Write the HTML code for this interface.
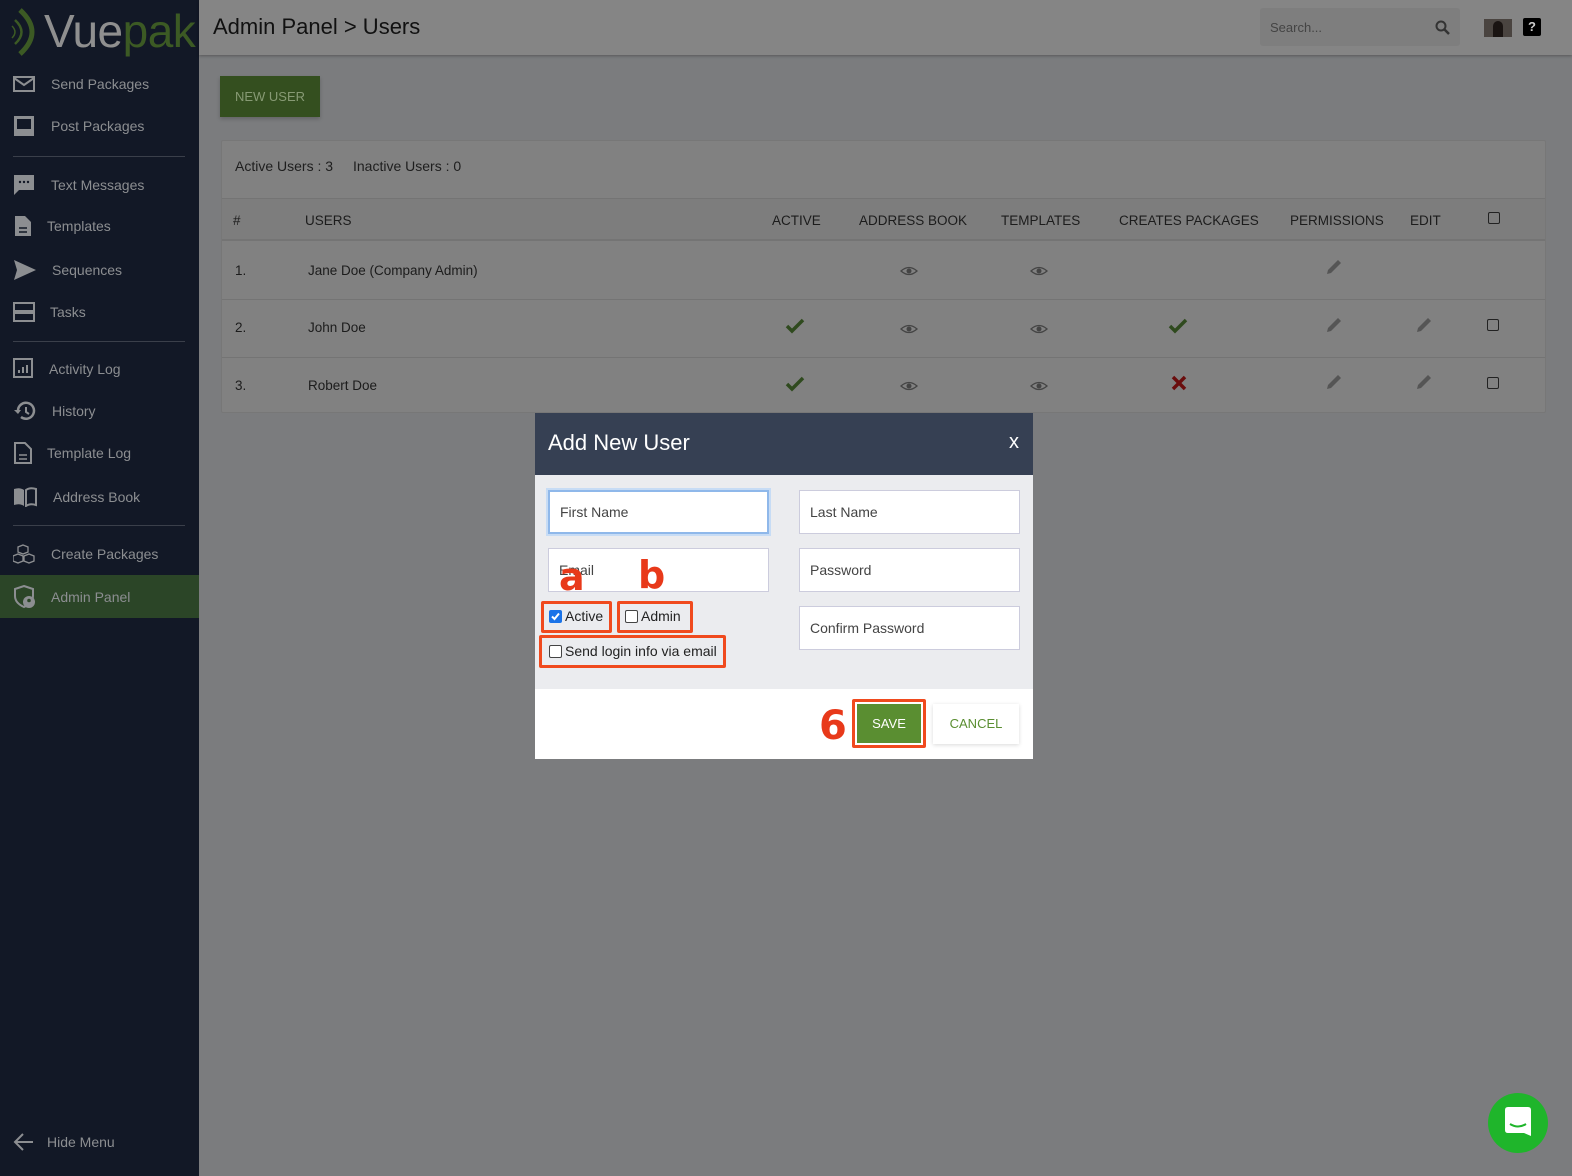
<!DOCTYPE html>
<html><head><meta charset="utf-8">
<style>
*{box-sizing:border-box;margin:0;padding:0}
body{width:1572px;height:1176px;overflow:hidden;font-family:"Liberation Sans",sans-serif;background:#7b7c7e;position:relative;color:#1e1e1e}
.sb{position:absolute;left:0;top:0;width:199px;height:1176px;background:#121826}
.logo{position:absolute;left:10px;top:4px;font-size:46px;letter-spacing:-0.5px}
.logo .v{color:#8f8f8f;margin-left:34px}.logo .p{color:#3c5a24}
.it{position:absolute;left:0;width:199px;height:42px;color:#8c8e91;font-size:14px;display:flex;align-items:center}
.it span{position:absolute;left:51px}
.it svg{position:absolute;left:13px}
.hr{position:absolute;left:13px;width:172px;height:1px;background:#3a3f4a}
.act{background:#2b4527}
.hdr{position:absolute;left:199px;top:0;right:0;height:55px;background:#858585;box-shadow:0 1px 3px rgba(0,0,0,.3)}
.hdr h1{position:absolute;left:14px;top:14px;font-weight:normal;font-size:22px;color:#111}
.search{position:absolute;left:1061px;top:8px;width:200px;height:38px;background:#7e7e7e;border-radius:3px;color:#444;font-size:13px;padding:12px 10px}
.btn{position:absolute;left:220px;top:76px;width:100px;height:41px;background:#344f1f;color:#879a74;font-size:13px;text-align:center;line-height:41px;box-shadow:0 2px 4px rgba(0,0,0,.2)}
.card{position:absolute;left:221px;top:140px;width:1325px;height:273px;background:#818181;border:1px solid #777;border-radius:2px}
.card .s{position:absolute;top:17px;font-size:14px}
.th{position:absolute;left:0;top:57px;width:100%;height:43px;background:#7d7d7d;border-top:1px solid #747474;border-bottom:2px solid #747474}
.t{position:absolute;font-size:13.5px;color:#1c1c1c}
.row{position:absolute;left:0;width:100%;height:58px;border-bottom:1px solid #747474}
.cb{position:absolute;width:12px;height:12px;border:1px solid #222;border-radius:2px}
.modal{position:absolute;left:535px;top:413px;width:498px;height:346px;background:#ebecef}
.mh{height:62px;background:#364053;color:#fff;font-size:22px;padding:17px 13px;position:relative}
.mh b{position:absolute;right:14px;top:18px;font-weight:normal;font-size:20px}
.in{position:absolute;width:221px;height:44px;background:#fff;border:1px solid #ccd;font-size:14px;color:#444;padding:13px 10px}
.ft{position:absolute;left:0;bottom:0;width:100%;height:70px;background:#fff}
.red{position:absolute;border:3px solid #f04a1e;border-radius:2px}
.lbl{position:absolute;font-size:14px;color:#222}
.big{position:absolute;color:#e8391a;font-weight:bold;font-family:"DejaVu Sans",sans-serif}
</style></head><body>
<div class="sb">
 <div class="logo"><svg style="position:absolute;left:0;top:4px" width="34" height="48" viewBox="0 0 34 48"><path d="M10 2 Q34 24 10 46" stroke="#3c5a24" stroke-width="5" fill="none"/><path d="M5 12 Q18 24 5 36" stroke="#3c5a24" stroke-width="2.5" fill="none"/><path d="M2 18 Q8 24 2 30" stroke="#3c5a24" stroke-width="1.5" fill="none"/></svg><span class="v">Vue</span><span class="p">pak</span></div>
 <div class="it" style="top:63px"><svg width="22" height="18"><rect x="1" y="2" width="20" height="14" fill="none" stroke="#8c8e91" stroke-width="2"/><path d="M1 3 L11 10 L21 3" stroke="#8c8e91" stroke-width="2" fill="none"/></svg><span>Send Packages</span></div>
 <div class="it" style="top:105px"><svg width="22" height="22"><rect x="1" y="1" width="20" height="20" fill="#8c8e91"/><rect x="4" y="4" width="14" height="10" fill="#121826"/></svg><span>Post Packages</span></div>
 <div class="hr" style="top:156px"></div>
 <div class="it" style="top:164px"><svg width="22" height="22"><path d="M1 1 H21 V16 H6 L1 21 Z" fill="#8c8e91"/><circle cx="7" cy="8" r="1.2" fill="#121826"/><circle cx="11" cy="8" r="1.2" fill="#121826"/><circle cx="15" cy="8" r="1.2" fill="#121826"/></svg><span>Text Messages</span></div>
 <div class="it" style="top:205px"><svg width="22" height="22"><path d="M2 1 H12 L18 7 V21 H2 Z" fill="#8c8e91"/><path d="M6 13 H14 M6 17 H14" stroke="#121826" stroke-width="1.5"/></svg><span style="left:47px">Templates</span></div>
 <div class="it" style="top:249px"><svg width="24" height="22"><path d="M1 1 L23 11 L1 21 L4 11 Z" fill="#8c8e91"/></svg><span style="left:52px">Sequences</span></div>
 <div class="it" style="top:291px"><svg width="22" height="22"><rect x="1" y="2" width="20" height="8" fill="none" stroke="#8c8e91" stroke-width="2"/><rect x="1" y="12" width="20" height="8" fill="none" stroke="#8c8e91" stroke-width="2"/></svg><span style="left:50px">Tasks</span></div>
 <div class="hr" style="top:341px"></div>
 <div class="it" style="top:348px"><svg width="22" height="22"><rect x="1" y="1" width="18" height="18" fill="none" stroke="#8c8e91" stroke-width="2"/><path d="M6 15v-3M10 15v-6M14 15v-8" stroke="#8c8e91" stroke-width="2"/></svg><span style="left:49px">Activity Log</span></div>
 <div class="it" style="top:390px"><svg width="24" height="22"><path d="M5 11 A8 8 0 1 1 8 17" stroke="#8c8e91" stroke-width="2.5" fill="none"/><path d="M1 10 L5 14 L8 10" fill="#8c8e91"/><path d="M13 7 V12 L16 14" stroke="#8c8e91" stroke-width="2" fill="none"/></svg><span style="left:52px">History</span></div>
 <div class="it" style="top:432px"><svg width="22" height="22"><path d="M2 1 H12 L18 7 V21 H2 Z" fill="none" stroke="#8c8e91" stroke-width="2"/><path d="M6 13 H14 M6 17 H14" stroke="#8c8e91" stroke-width="1.5"/></svg><span style="left:47px">Template Log</span></div>
 <div class="it" style="top:476px"><svg width="24" height="20"><path d="M1 2 Q7 0 11 3 V19 Q7 16 1 18 Z" fill="#8c8e91"/><path d="M13 3 Q17 0 23 2 V18 Q17 16 13 19 Z" fill="none" stroke="#8c8e91" stroke-width="2"/></svg><span style="left:53px">Address Book</span></div>
 <div class="hr" style="top:525px"></div>
 <div class="it" style="top:533px"><svg width="24" height="22"><path d="M8 2l5 2v5l-5 2-5-2V4z M3 11l5 2v5l-5 2-5-2v-5z M14 11l5 2v5l-5 2-5-2v-5z" fill="none" stroke="#8c8e91" stroke-width="1.3" transform="translate(2,0)"/></svg><span>Create Packages</span></div>
 <div class="it act" style="top:575px;height:43px"><svg width="24" height="24"><path d="M11 1 L20 4 V11 Q20 18 11 22 Q2 18 2 11 V4 Z" fill="none" stroke="#8c8e91" stroke-width="2"/><circle cx="16" cy="17" r="6" fill="#8c8e91"/><circle cx="16" cy="15.5" r="1.8" fill="#2b4527"/></svg><span>Admin Panel</span></div>
 <div class="it" style="top:1121px"><svg width="22" height="22"><path d="M20 11 H3 M10 3 L2 11 L10 19" stroke="#8c8e91" stroke-width="2" fill="none"/></svg><span style="left:47px">Hide Menu</span></div>
</div>
<div class="hdr"><h1>Admin Panel &gt; Users</h1>
 <div class="search">Search...<svg style="position:absolute;right:10px;top:12px" width="15" height="15"><circle cx="6" cy="6" r="4.5" stroke="#333" stroke-width="2" fill="none"/><path d="M9.5 9.5 L14 14" stroke="#333" stroke-width="2.5"/></svg></div>
 <div style="position:absolute;left:1285px;top:19px;width:28px;height:18px;background:#4a4440"><div style="margin:2px 9px;width:10px;height:16px;background:#1a1412;border-radius:5px 5px 0 0"></div></div>
 <div style="position:absolute;left:1324px;top:18px;width:18px;height:18px;background:#000;border-radius:2px;color:#ccc;font-size:13px;font-weight:bold;text-align:center;line-height:18px">?</div>
</div>
<div class="btn">NEW USER</div>
<div class="card">
 <div class="s" style="left:13px">Active Users : 3</div><div class="s" style="left:131px">Inactive Users : 0</div>
 <div class="th">
  <div class="t" style="left:11px;top:14px">#</div><div class="t" style="left:83px;top:14px">USERS</div>
  <div class="t" style="left:550px;top:14px">ACTIVE</div><div class="t" style="left:637px;top:14px">ADDRESS BOOK</div>
  <div class="t" style="left:779px;top:14px">TEMPLATES</div><div class="t" style="left:897px;top:14px">CREATES PACKAGES</div>
  <div class="t" style="left:1068px;top:14px">PERMISSIONS</div><div class="t" style="left:1188px;top:14px">EDIT</div>
  <div class="cb" style="left:1266px;top:13px"></div>
 </div>
 <div class="row" style="top:101px"><div class="t" style="left:13px;top:21px">1.</div><div class="t" style="left:86px;top:21px">Jane Doe (Company Admin)</div></div>
 <div class="row" style="top:159px"><div class="t" style="left:13px;top:20px">2.</div><div class="t" style="left:86px;top:20px">John Doe</div><div class="cb" style="left:1265px;top:19px"></div></div>
 <div class="row" style="top:216px;border:none"><div class="t" style="left:13px;top:21px">3.</div><div class="t" style="left:86px;top:21px">Robert Doe</div><div class="cb" style="left:1265px;top:20px"></div></div>
 <svg style="position:absolute;left:0;top:0" width="1325" height="273">
  <defs><g id="eye"><path d="M-8 0 Q0 -7 8 0 Q0 7 -8 0Z" fill="none" stroke="#444" stroke-width="1.3"/><circle r="2.5" fill="#444"/></g>
  <g id="pen"><path d="M-7 7 L-6 3 L4 -7 L7 -4 L-3 6 Z" fill="#555"/></g>
  <path id="chk" d="M-8 0 L-3 5 L8 -6" stroke="#2f4a1e" stroke-width="3.5" fill="none"/></defs>
  <use href="#eye" x="687" y="130"/><use href="#eye" x="817" y="130"/><use href="#pen" x="1112" y="126"/>
  <use href="#chk" x="573" y="185"/><use href="#eye" x="687" y="188"/><use href="#eye" x="817" y="188"/><use href="#chk" x="956" y="185"/><use href="#pen" x="1112" y="184"/><use href="#pen" x="1202" y="184"/>
  <use href="#chk" x="573" y="243"/><use href="#eye" x="687" y="245"/><use href="#eye" x="817" y="245"/><path d="M951 236 L963 248 M963 236 L951 248" stroke="#6a0d0d" stroke-width="3.5"/><use href="#pen" x="1112" y="241"/><use href="#pen" x="1202" y="241"/>
 </svg>
</div>
<div class="modal">
 <div class="mh">Add New User<b>x</b></div>
 <div class="in" style="left:13px;top:77px;border:2px solid #8fb8ea;box-shadow:0 0 0 2px #c7dcf5;padding:12px 10px">First Name</div>
 <div class="in" style="left:264px;top:77px">Last Name</div>
 <div class="in" style="left:13px;top:135px">Email</div>
 <div class="in" style="left:264px;top:135px">Password</div>
 <div class="in" style="left:264px;top:193px">Confirm Password</div>
 <div class="big" style="left:24px;top:142px;font-size:38px">a</div>
 <div class="big" style="left:103px;top:140px;font-size:38px">b</div>
 <div class="red" style="left:6px;top:188px;width:71px;height:32px"></div>
 <div style="position:absolute;left:14px;top:197px;width:13px;height:13px;background:#1a73e8;border-radius:2px"><svg width="13" height="13"><path d="M3 6.5 L5.5 9 L10 3.5" stroke="#fff" stroke-width="2" fill="none"/></svg></div>
 <div class="lbl" style="left:30px;top:195px">Active</div>
 <div class="red" style="left:82px;top:188px;width:76px;height:32px"></div>
 <div class="cb" style="left:90px;top:197px;width:13px;height:13px;border-color:#444;background:#fff"></div>
 <div class="lbl" style="left:106px;top:195px">Admin</div>
 <div class="red" style="left:4px;top:222px;width:187px;height:33px"></div>
 <div class="cb" style="left:14px;top:232px;width:13px;height:13px;border-color:#444;background:#fff"></div>
 <div class="lbl" style="left:30px;top:230px">Send login info via email</div>
 <div class="ft">
  <div class="big" style="left:284px;top:14px;font-size:40px">6</div>
  <div class="red" style="left:317px;top:10px;width:74px;height:49px"></div>
  <div style="position:absolute;left:322px;top:15px;width:64px;height:39px;background:#5a8e31;color:#fff;font-size:13px;text-align:center;line-height:39px">SAVE</div>
  <div style="position:absolute;left:398px;top:15px;width:86px;height:40px;background:#fff;box-shadow:0 1px 4px rgba(0,0,0,.15);color:#5a8e31;font-size:13px;text-align:center;line-height:40px">CANCEL</div>
 </div>
</div>
<svg style="position:absolute;left:1488px;top:1093px" width="60" height="60"><circle cx="30" cy="30" r="30" fill="#1fb52b"/><path d="M17 17 Q17 14 20 14 H40 Q43 14 43 17 V43 L36 40 H20 Q17 40 17 37 Z" fill="#fff"/><path d="M22 31 Q30 36 38 31" stroke="#1fb52b" stroke-width="2" fill="none"/></svg>
</body></html>
